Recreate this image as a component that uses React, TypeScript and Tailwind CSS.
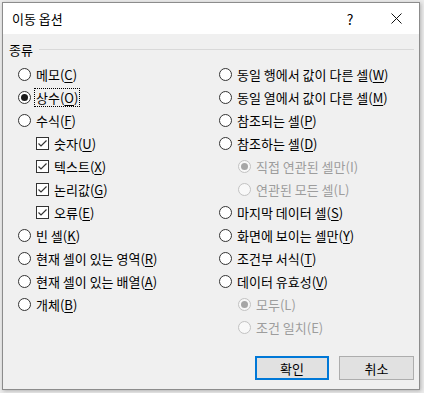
import React from 'react';

const FONT = "font-['Noto_Sans_CJK_KR','Noto_Sans',sans-serif]";

type Item = {
    label: string;
    key?: string;
    checked?: boolean;
    disabled?: boolean;
    focused?: boolean;
    indent?: boolean;
    kind?: 'radio' | 'check';
};

const leftItems: Item[] = [
    { label: '메모', key: 'C' },
    { label: '상수', key: 'O', checked: true, focused: true },
    { label: '수식', key: 'F' },
    { label: '숫자', key: 'U', kind: 'check', checked: true, indent: true },
    { label: '텍스트', key: 'X', kind: 'check', checked: true, indent: true },
    { label: '논리값', key: 'G', kind: 'check', checked: true, indent: true },
    { label: '오류', key: 'E', kind: 'check', checked: true, indent: true },
    { label: '빈 셀', key: 'K' },
    { label: '현재 셀이 있는 영역', key: 'R' },
    { label: '현재 셀이 있는 배열', key: 'A' },
    { label: '개체', key: 'B' },
];

const rightItems: Item[] = [
    { label: '동일 행에서 값이 다른 셀', key: 'W' },
    { label: '동일 열에서 값이 다른 셀', key: 'M' },
    { label: '참조되는 셀', key: 'P' },
    { label: '참조하는 셀', key: 'D' },
    { label: '직접 연관된 셀만', key: 'I', disabled: true, checked: true, indent: true },
    { label: '연관된 모든 셀', key: 'L', disabled: true, indent: true },
    { label: '마지막 데이터 셀', key: 'S' },
    { label: '화면에 보이는 셀만', key: 'Y' },
    { label: '조건부 서식', key: 'T' },
    { label: '데이터 유효성', key: 'V' },
    { label: '모두', key: 'L', disabled: true, checked: true, indent: true },
    { label: '조건 일치', key: 'E', disabled: true, indent: true },
];

function Radio({ checked, disabled }: { checked?: boolean; disabled?: boolean }) {
    return (
        <span
            className={
                disabled
                    ? 'w-[13px] h-[13px] shrink-0 rounded-full border border-[#c2c2c2] bg-[#f8f8f8] flex items-center justify-center'
                    : 'w-[13px] h-[13px] shrink-0 rounded-full border border-[#333333] bg-white flex items-center justify-center'
            }
        >
            {checked && (
                <span
                    className={
                        disabled
                            ? 'w-[7px] h-[7px] rounded-full bg-[#a6a6a6]'
                            : 'w-[7px] h-[7px] rounded-full bg-[#1a1a1a]'
                    }
                />
            )}
        </span>
    );
}

function Check({ checked }: { checked?: boolean }) {
    return (
        <span className="w-[13px] h-[13px] shrink-0 border border-[#333333] bg-white flex items-center justify-center">
            {checked && (
                <svg width="11" height="11" viewBox="0 0 11 11">
                    <polyline
                        points="1.5,5.5 4,8 9.5,2.5"
                        fill="none"
                        stroke="#333333"
                        strokeWidth="1.2"
                    />
                </svg>
            )}
        </span>
    );
}

function Row({ item, indentClass }: { item: Item; indentClass: string }) {
    const text = (
        <span className={item.disabled ? 'text-[#9d9d9d]' : 'text-black'}>
            {item.label}(
            {item.disabled ? item.key : <span className="underline underline-offset-2">{item.key}</span>})
        </span>
    );
    return (
        <div className={`h-[23px] flex items-center gap-[5px] ${item.indent ? indentClass : ''}`}>
            {item.kind === 'check' ? (
                <Check checked={item.checked} />
            ) : (
                <Radio checked={item.checked} disabled={item.disabled} />
            )}
            {item.focused ? (
                <span className="-ml-[2px] px-[1px] h-[19px] flex items-center border border-dotted border-black">
                    {text}
                </span>
            ) : (
                text
            )}
        </div>
    );
}

export default function App() {
    return (
        <div className={`w-[424px] h-[393px] bg-[#ececec] pt-[2px] pl-[2px] ${FONT} text-[13px] leading-none`}>
            <div className="w-[418px] h-[388px] border border-[#8c8c8c] bg-[#f0f0f0] flex flex-col shadow-[1px_1px_4px_rgba(0,0,0,0.25)]">
                {/* title bar */}
                <div className="h-[31px] bg-white flex items-center shrink-0">
                    <div className="pl-[9px] flex-1 text-[13px] text-black">이동 옵션</div>
                    <div className="w-[46px] h-full flex items-center justify-center text-[14px] text-black">?</div>
                    <div className="w-[46px] h-full flex items-center justify-center">
                        <svg width="11" height="11" viewBox="0 0 11 11">
                            <path d="M0.5 0.5 L10.5 10.5 M10.5 0.5 L0.5 10.5" stroke="#111111" strokeWidth="1" />
                        </svg>
                    </div>
                </div>

                {/* group */}
                <div className="mt-[8px] h-[14px] flex items-center pl-[6px] pr-[5px] gap-[6px]">
                    <span className="text-black">종류</span>
                    <div className="flex-1 h-px bg-[#d9d9d9]" />
                </div>

                <div className="mt-[7px] flex">
                    <div className="w-[216px] pl-[15px] flex flex-col">
                        {leftItems.map((it, i) => (
                            <Row key={i} item={it} indentClass="pl-[18px]" />
                        ))}
                    </div>
                    <div className="flex-1 flex flex-col">
                        {rightItems.map((it, i) => (
                            <Row key={i} item={it} indentClass="pl-[19px]" />
                        ))}
                    </div>
                </div>

                {/* buttons */}
                <div className="mt-auto pb-[9px] pr-[5px] flex justify-end gap-[10px]">
                    <button className="w-[74px] h-[24px] border-2 border-[#0078d7] bg-[#e1e1e1] text-black flex items-center justify-center">
                        확인
                    </button>
                    <button className="w-[75px] h-[24px] border border-[#adadad] bg-[#e1e1e1] text-black flex items-center justify-center">
                        취소
                    </button>
                </div>
            </div>
        </div>
    );
}
